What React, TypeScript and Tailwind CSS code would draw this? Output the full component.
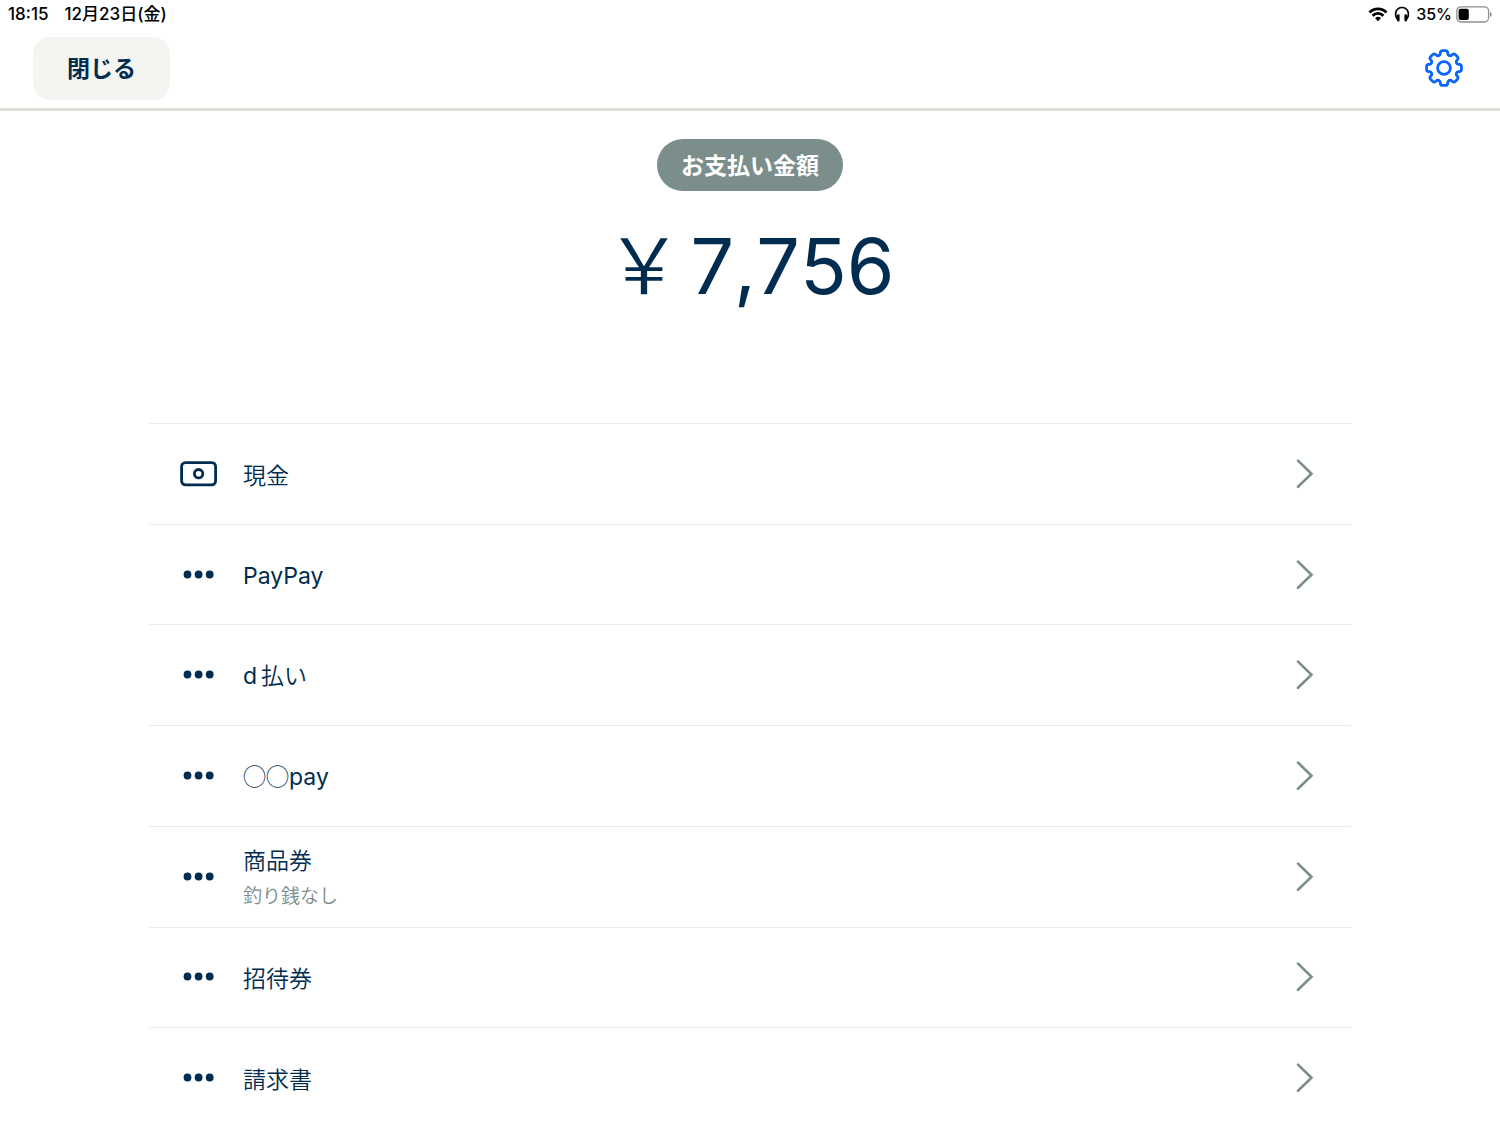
import type { ReactNode } from "react";

const font = "font-['Inter','Noto_Sans_CJK_JP',sans-serif]";

type Method = {
  id: string;
  label: ReactNode;
  note?: string;
  icon?: "cash";
};

const Latin = ({ children }: { children: ReactNode }) => (
  <span className="font-['Inter',sans-serif] font-normal">{children}</span>
);

const methods: Method[] = [
  { id: "cash", label: "現金", icon: "cash" },
  { id: "paypay", label: <Latin>PayPay</Latin> },
  { id: "dbarai", label: <span className="flex items-baseline gap-1"><Latin>d</Latin>払い</span> },
  { id: "pay", label: <>◯◯<Latin>pay</Latin></> },
  { id: "gift", label: "商品券", note: "釣り銭なし" },
  { id: "invite", label: "招待券" },
  { id: "invoice", label: "請求書" },
];

const CashIcon = () => (
  <svg viewBox="0 0 38 26" className="w-[38px] h-[26px]" fill="none" stroke="currentColor" strokeWidth="2.8" aria-hidden="true">
    <rect x="1.6" y="1.6" width="34" height="22.2" rx="3.8" />
    <circle cx="18.6" cy="12.7" r="4.2" />
  </svg>
);

const DotsIcon = () => (
  <svg viewBox="0 0 38 26" className="w-[38px] h-[26px]" fill="currentColor" aria-hidden="true">
    <circle cx="7.5" cy="12.5" r="3.9" />
    <circle cx="18.6" cy="12.5" r="3.9" />
    <circle cx="29.7" cy="12.5" r="3.9" />
  </svg>
);

const ChevronIcon = () => (
  <svg viewBox="0 0 18 30" className="w-[18px] h-[30px] text-[#7b8e8c]" fill="none" stroke="currentColor" strokeWidth="2.6" strokeLinecap="round" aria-hidden="true">
    <path d="M2 1.6 15.5 14.7 2 27.8" />
  </svg>
);

// one tooth of the gear outline, repeated around the centre
const toothAngles = [0, 45, 90, 135, 180, 225, 270, 315];

const GearIcon = () => (
  <svg viewBox="-20 -20 40 40" className="size-10" fill="none" stroke="currentColor" strokeWidth="2.8" strokeLinecap="round" strokeLinejoin="round" aria-hidden="true">
    <circle r="6.4" />
    {toothAngles.map((a) => (
      <path
        key={a}
        transform={`rotate(${a})`}
        d="M-5.2 -12.55 Q-3.8 -13 -3.7 -14.4 L-3.6 -15.5 Q-3.4 -17.4 -1.6 -17.4 H1.6 Q3.4 -17.4 3.6 -15.5 L3.7 -14.4 Q3.8 -13 5.2 -12.55"
      />
    ))}
  </svg>
);

const StatusBar = () => (
  <div className="flex h-7 items-center justify-between px-2 text-[17px] font-medium text-black">
    <div className="flex items-center gap-4 pt-0.5">
      <span>18:15</span>
      <span>12月23日(金)</span>
    </div>
    <div className="flex items-center gap-1">
      <svg viewBox="0 0 20 15" className="w-5 h-[15px]" fill="none" stroke="currentColor" strokeWidth="2.8" aria-hidden="true">
        <path d="M1.5 5.4a12 12 0 0 1 17 0" />
        <path d="M4.6 8.7a7.6 7.6 0 0 1 10.8 0" />
        <path d="M10 14.3 7.1 11.3a4.1 4.1 0 0 1 5.8 0Z" fill="currentColor" stroke="none" />
      </svg>
      <svg viewBox="0 0 20 18" className="w-5 h-[18px]" fill="none" stroke="currentColor" strokeWidth="1.7" aria-hidden="true">
        <path d="M5.6 14.6C1.8 9.5 3.8 2.5 10 2.5s8.2 7 4.4 12.1" />
        <path d="M6.3 10.5v4.7M13.7 10.5v4.7" strokeWidth="2.6" strokeLinecap="round" />
      </svg>
      <span className="text-base">35%</span>
      <svg viewBox="0 0 36 17" className="w-9 h-[17px]" aria-hidden="true">
        <rect x="0.8" y="0.8" width="31.8" height="15.2" rx="4.2" fill="none" stroke="#8e8e8e" strokeWidth="1.3" />
        <rect x="2.6" y="2.7" width="10.2" height="11.4" rx="2" />
        <path d="M34 5.8a2.8 2.8 0 0 1 0 5.2Z" fill="#8e8e8e" />
      </svg>
    </div>
  </div>
);

const Header = () => (
  <header className="flex h-[83px] items-center justify-between border-b-[3px] border-[#dedfd8] pl-[33px] pr-9">
    <button className="h-[63px] rounded-[17px] bg-[#f4f5f1] px-[34px] pt-0.5 text-[23px] font-bold">閉じる</button>
    <button aria-label="設定" className="text-[#0a66ff]">
      <GearIcon />
    </button>
  </header>
);

const Amount = () => (
  <section className="flex flex-col items-center pt-7">
    <h1 className="flex h-[52px] items-center rounded-full bg-[#7b8e8c] px-6 pt-0.5 text-[23px] font-bold text-white">
      お支払い金額
    </h1>
    <p className="mt-6 flex h-[92px] items-baseline gap-2 text-[77px] leading-[92px] [font-kerning:none]">
      <span className="font-['Noto_Sans_CJK_JP',sans-serif] font-[350]">￥</span>
      <span>7,756</span>
    </p>
  </section>
);

const MethodRow = ({ label, note, icon }: Method) => (
  <li className="border-t border-[#e9ebe9]">
    <button className="flex h-full w-full items-center pl-[31px] pr-[37px] text-left">
      {icon === "cash" ? <CashIcon /> : <DotsIcon />}
      <span className="ml-[25px] flex flex-1 flex-col gap-1 font-['Noto_Sans_CJK_JP',sans-serif] font-[350]">
        <span className="text-[23px] leading-8">{label}</span>
        {note && <span className="text-[19px] leading-8 text-[#7b8e8c]">{note}</span>}
      </span>
      <ChevronIcon />
    </button>
  </li>
);

export default function App() {
  return (
    <div className={`${font} h-screen overflow-y-auto bg-white text-[#002c50] [scrollbar-width:none]`} lang="ja">
      <StatusBar />
      <Header />
      <main>
        <Amount />
        <ul className="mx-[149px] mt-29 grid min-h-[705px] auto-rows-fr">
          {methods.map((m) => (
            <MethodRow key={m.id} {...m} />
          ))}
        </ul>
      </main>
    </div>
  );
}
